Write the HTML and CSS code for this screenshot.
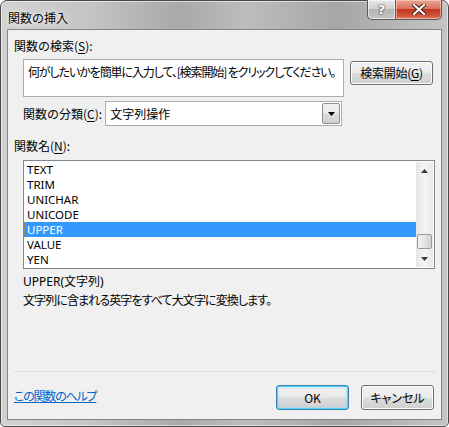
FILE: index.html
```html
<!DOCTYPE html>
<html lang="ja">
<head>
<meta charset="utf-8">
<title>関数の挿入</title>
<link rel="stylesheet" href="styles.css">
</head>
<body>
<div class="window">
  <div class="titlebar">
    <div class="title">関数の挿入</div>
    <div class="caption-buttons">
      <div class="cap-btn help">?</div>
      <div class="cap-btn close">
        <svg width="14" height="11" viewBox="0 0 14 11"><path d="M2 1 L12 10 M12 1 L2 10" stroke="#3a1a14" stroke-width="4" stroke-linecap="square"/><path d="M2 1 L12 10 M12 1 L2 10" stroke="#ffffff" stroke-width="2.2" stroke-linecap="square"/></svg>
      </div>
    </div>
  </div>
  <div class="client">
    <div class="label top-label">関数の検索(<u>S</u>):</div>
    <div class="search-row">
      <div class="textbox">何がしたいかを簡単に入力して、[検索開始] をクリックしてください。</div>
      <div class="btn search-btn">検索開始(<u>G</u>)</div>
    </div>
    <div class="category-row">
      <div class="label">関数の分類(<u>C</u>):</div>
      <div class="select">
        <span class="select-text">文字列操作</span>
        <span class="select-arrow"><svg width="7" height="4" viewBox="0 0 7 4"><path d="M0 0 H7 L3.5 4 Z" fill="#000"/></svg></span>
      </div>
    </div>
    <div class="label names-label">関数名(<u>N</u>):</div>
    <div class="listbox">
      <ul class="items">
        <li>TEXT</li>
        <li>TRIM</li>
        <li>UNICHAR</li>
        <li>UNICODE</li>
        <li class="selected">UPPER</li>
        <li>VALUE</li>
        <li>YEN</li>
      </ul>
      <div class="scrollbar">
        <div class="sb-arrow"><svg width="7" height="4" viewBox="0 0 7 4"><path d="M3.5 0 L7 4 H0 Z" fill="#3a3a3a"/></svg></div>
        <div class="sb-track"><div class="sb-thumb"></div></div>
        <div class="sb-arrow"><svg width="7" height="4" viewBox="0 0 7 4"><path d="M0 0 H7 L3.5 4 Z" fill="#3a3a3a"/></svg></div>
      </div>
    </div>
    <div class="desc">
      <div class="syntax">UPPER(文字列)</div>
      <div class="explain">文字列に含まれる英字をすべて大文字に変換します。</div>
    </div>
    <div class="separator"></div>
    <div class="footer">
      <a class="help-link" href="#">この関数のヘルプ</a>
      <div class="footer-buttons">
        <div class="btn ok-btn">OK</div>
        <div class="btn cancel-btn">キャンセル</div>
      </div>
    </div>
  </div>
</div>
</body>
</html>
```
FILE: styles.css
```css
* { box-sizing: border-box; }
html, body { margin: 0; padding: 0; background: #ffffff; }
body {
  font-family: "Noto Sans", "Noto Sans CJK JP", sans-serif;
  font-size: 12px;
  color: #000;
}
u { text-decoration: underline; text-underline-offset: 2px; }
.window {
  width: 449px;
  height: 427px;
  border: 1px solid #4a4a4a;
  border-radius: 7px 7px 5px 5px;
  background: linear-gradient(90deg, #d2d2d2 0%, #c4c4c4 20%, #a9a9a9 40%, #bdbdbd 55%, #a6a6a6 75%, #c4c4c4 100%);
  display: flex;
  flex-direction: column;
  padding: 0 6px 6px 6px;
  box-shadow: inset 0 0 0 1px rgba(255,255,255,0.55);
}
.titlebar {
  height: 28px;
  display: flex;
  justify-content: space-between;
  align-items: flex-start;
  flex: none;
}
.title {
  margin-top: 7px;
  margin-left: 1px;
  font-family: "Noto Sans CJK JP", sans-serif;
  font-size: 12px;
  line-height: 20px;
  color: #000;
  text-shadow: 0 0 8px rgba(255,255,255,0.9), 0 0 3px rgba(255,255,255,0.9);
}
.caption-buttons {
  display: flex;
  margin-top: -1px;
}
.cap-btn {
  height: 20px;
  display: flex;
  align-items: center;
  justify-content: center;
  border: 1px solid #5a5a5a;
  border-top: none;
}
.help {
  width: 28px;
  border-radius: 0 0 0 5px;
  border-right: none;
  background: linear-gradient(180deg, #e6e6e6 0%, #d2d2d2 45%, #b4b4b4 50%, #c6c6c6 100%);
  font-family: "DejaVu Sans", sans-serif;
  font-weight: bold;
  font-size: 13px;
  color: #fff;
  text-shadow: 0 0 1px #333, 0 0 2px #333;
  box-shadow: inset 0 0 0 1px rgba(255,255,255,0.6);
}
.close {
  width: 47px;
  border-radius: 0 0 5px 0;
  background: linear-gradient(180deg, #e9a596 0%, #d9735f 45%, #c2351f 50%, #d05a3e 85%, #e0876a 100%);
  box-shadow: inset 0 0 0 1px rgba(255,210,200,0.6);
}
.client {
  flex: 1;
  border: 1px solid #858585;
  background: #f0f0f0;
  display: flex;
  flex-direction: column;
  padding: 0 6px 0 6px;
}
.label {
  font-family: "Noto Sans CJK JP", sans-serif;
  line-height: 18px;
  white-space: nowrap;
}
.top-label { margin-top: 7px; }
.search-row {
  display: flex;
  align-items: flex-start;
  margin-top: 4px;
  padding-left: 9px;
}
.textbox {
  width: 321px;
  height: 38px;
  background: #fff;
  border: 1px solid #aaacb2;
  padding: 3px 4px;
  font-family: "Noto Sans CJK JP", sans-serif;
  font-feature-settings: "palt";
  letter-spacing: -1.1px;
  line-height: 18px;
  white-space: nowrap;
  overflow: hidden;
}
.btn {
  height: 24px;
  border: 1px solid #707070;
  border-radius: 3px;
  background: linear-gradient(180deg, #f2f2f2 0%, #ebebeb 49%, #dddddd 51%, #cfcfcf 100%);
  box-shadow: inset 0 0 0 1px #fcfcfc;
  display: flex;
  align-items: center;
  justify-content: center;
  font-family: "Noto Sans CJK JP", sans-serif;
  line-height: 16px;
  white-space: nowrap;
}
.search-btn {
  width: 83px;
  margin-left: 6px;
  margin-top: 2px;
  letter-spacing: -0.3px;
}
.category-row {
  display: flex;
  align-items: center;
  margin-top: 4px;
  padding-left: 9px;
}
.select {
  margin-left: 3px;
  width: 237px;
  height: 25px;
  background: #fff;
  border: 1px solid #aaacb2;
  display: flex;
  align-items: center;
  justify-content: space-between;
  padding: 0 1px 0 4px;
}
.select-text {
  font-family: "Noto Sans CJK JP", sans-serif;
  line-height: 18px;
}
.select-arrow {
  width: 18px;
  height: 21px;
  border: 1px solid #8e8f8f;
  border-radius: 2px;
  background: linear-gradient(180deg, #f2f2f2 0%, #ebebeb 49%, #dddddd 51%, #cfcfcf 100%);
  display: flex;
  align-items: center;
  justify-content: center;
}
.names-label { margin-top: 11px; }
.listbox {
  margin-top: 5px;
  margin-left: 9px;
  width: 412px;
  height: 109px;
  border: 1px solid #828790;
  background: #fff;
  display: flex;
  padding: 1px 1px 1px 0;
}
.items {
  list-style: none;
  margin: 0;
  padding: 0;
  flex: 1;
}
.items li {
  height: 15px;
  line-height: 15px;
  font-size: 11.5px;
  padding-left: 3px;
  color: #000;
  white-space: nowrap;
  overflow: hidden;
}
.items li.selected {
  background: #3399ff;
  color: #fff;
  outline: 1px dotted #c8742a;
  outline-offset: -1px;
}
.scrollbar {
  width: 17px;
  display: flex;
  flex-direction: column;
  background: linear-gradient(90deg, #e6e6e6, #f4f4f4 50%, #e9e9e9);
}
.sb-arrow {
  height: 17px;
  display: flex;
  align-items: center;
  justify-content: center;
}
.sb-track {
  flex: 1;
  display: flex;
  flex-direction: column;
  justify-content: flex-end;
  padding: 0 1px 1px 1px;
}
.sb-thumb {
  height: 15px;
  border: 1px solid #9a9a9a;
  border-radius: 2px;
  background: linear-gradient(90deg, #f2f2f2, #e4e4e4 50%, #d2d2d2);
}
.desc {
  margin-top: 4px;
  padding-left: 9px;
  font-family: "Noto Sans", "Noto Sans CJK JP", sans-serif;
}
.syntax { line-height: 18px; }
.explain {
  line-height: 18px;
  font-family: "Noto Sans CJK JP", sans-serif;
  font-feature-settings: "palt";
  letter-spacing: -0.9px;
}
.separator {
  margin-top: 62px;
  height: 1px;
  background: #d5dfe5;
}
.footer {
  display: flex;
  justify-content: space-between;
  align-items: center;
  margin-top: 13px;
}
.help-link {
  font-family: "Noto Sans CJK JP", sans-serif;
  font-feature-settings: "palt";
  letter-spacing: -1.2px;
  color: #0066cc;
  text-decoration: underline;
  line-height: 18px;
  margin-top: -4px;
}
.footer-buttons {
  display: flex;
  gap: 12px;
  margin-right: 1px;
}
.ok-btn, .cancel-btn { width: 73px; height: 25px; }
.ok-btn {
  border-color: #3c7fb1;
  box-shadow: inset 0 0 0 1px #48d7fb, inset 0 0 2px 2px rgba(150,220,250,0.5);
}
.cancel-btn { font-feature-settings: "palt"; }
```
